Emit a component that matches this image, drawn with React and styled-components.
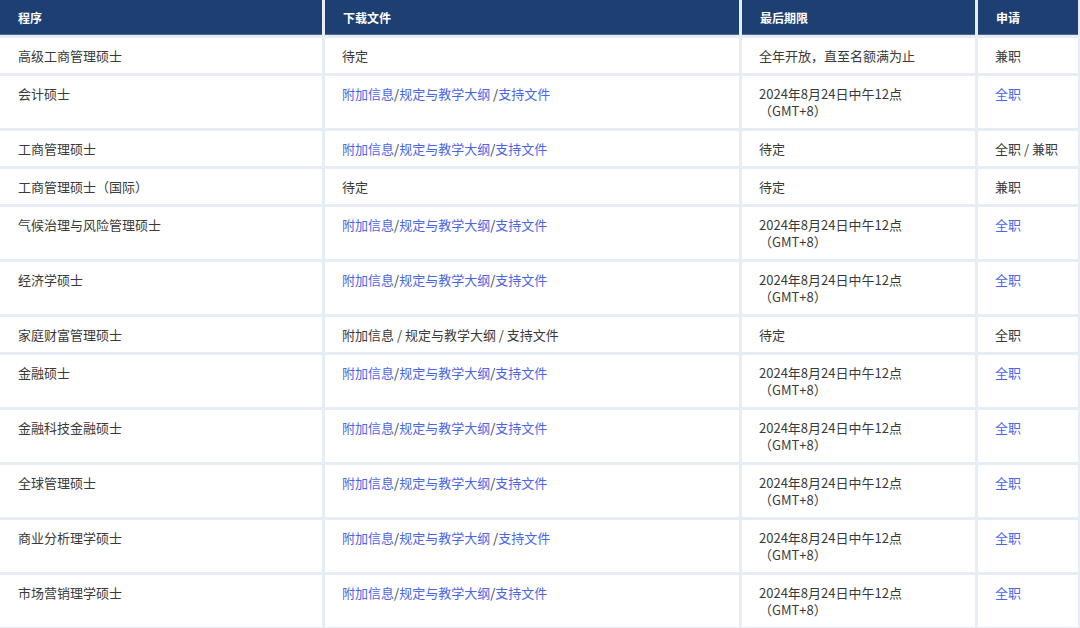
import styled, { createGlobalStyle } from "styled-components";

const GlobalStyle = createGlobalStyle`
  body {
    margin: 0;
    background-color: #e6edf5;
    font-family: "Noto Sans CJK SC", "Noto Sans", sans-serif;
  }
`;

const Table = styled.div`
  display: grid;
  grid-template-columns: 322px 414px 233px 100px;
  column-gap: 3px;
  row-gap: 3px;
  background-color: #e6edf5;
  width: 1080px;
`;

const HeadCell = styled.div`
  height: 35px;
  display: flex;
  align-items: center;
  padding-left: 18px;
  background-color: #1e3f72;
  border-bottom: 1px solid #4d6a94;
  box-sizing: border-box;
  color: #fff;
  font-size: 12px;
  font-weight: bold;
`;

const Cell = styled.div`
  background-color: #fff;
  padding: 9px 17px 9px ${(p) => (p.$first ? "18px" : "17px")};
  font-size: 13px;
  line-height: 17px;
  color: #3a3a3a;
  white-space: pre-wrap;
  text-spacing-trim: space-all;
`;

const Link = styled.a`
  color: #4a66e8;
  text-decoration: none;
`;

const Slash = styled.span`
  color: #3a3a3a;
`;

const DEADLINE = "2024年8月24日中午12点\n（GMT+8）";

const Files = ({ spaced }) => (
  <>
    <Link>附加信息</Link>
    <Slash>/</Slash>
    <Link>规定与教学大纲{spaced ? " " : ""}</Link>
    <Slash>/</Slash>
    <Link>支持文件</Link>
  </>
);

const rows = [
  { name: "高级工商管理硕士", files: "待定", date: "全年开放，直至名额满为止", apply: "兼职" },
  { name: "会计硕士", files: <Files spaced />, date: DEADLINE, apply: <Link>全职</Link> },
  { name: "工商管理硕士", files: <Files />, date: "待定", apply: "全职 / 兼职" },
  { name: "工商管理硕士（国际）", files: "待定", date: "待定", apply: "兼职" },
  { name: "气候治理与风险管理硕士", files: <Files />, date: DEADLINE, apply: <Link>全职</Link> },
  { name: "经济学硕士", files: <Files />, date: DEADLINE, apply: <Link>全职</Link> },
  { name: "家庭财富管理硕士", files: "附加信息 / 规定与教学大纲 / 支持文件", date: "待定", apply: "全职" },
  { name: "金融硕士", files: <Files />, date: DEADLINE, apply: <Link>全职</Link> },
  { name: "金融科技金融硕士", files: <Files />, date: DEADLINE, apply: <Link>全职</Link> },
  { name: "全球管理硕士", files: <Files />, date: DEADLINE, apply: <Link>全职</Link> },
  { name: "商业分析理学硕士", files: <Files spaced />, date: DEADLINE, apply: <Link>全职</Link> },
  { name: "市场营销理学硕士", files: <Files />, date: DEADLINE, apply: <Link>全职</Link> },
];

const App = () => {
  return (
    <>
      <GlobalStyle />
      <Table>
        <HeadCell>程序</HeadCell>
        <HeadCell>下载文件</HeadCell>
        <HeadCell>最后期限</HeadCell>
        <HeadCell>申请</HeadCell>
        {rows.map((r) => [
          <Cell $first key={r.name + "-n"}>{r.name}</Cell>,
          <Cell key={r.name + "-f"}>{r.files}</Cell>,
          <Cell key={r.name + "-d"}>{r.date}</Cell>,
          <Cell key={r.name + "-a"}>{r.apply}</Cell>,
        ])}
      </Table>
    </>
  );
};

export default App;
